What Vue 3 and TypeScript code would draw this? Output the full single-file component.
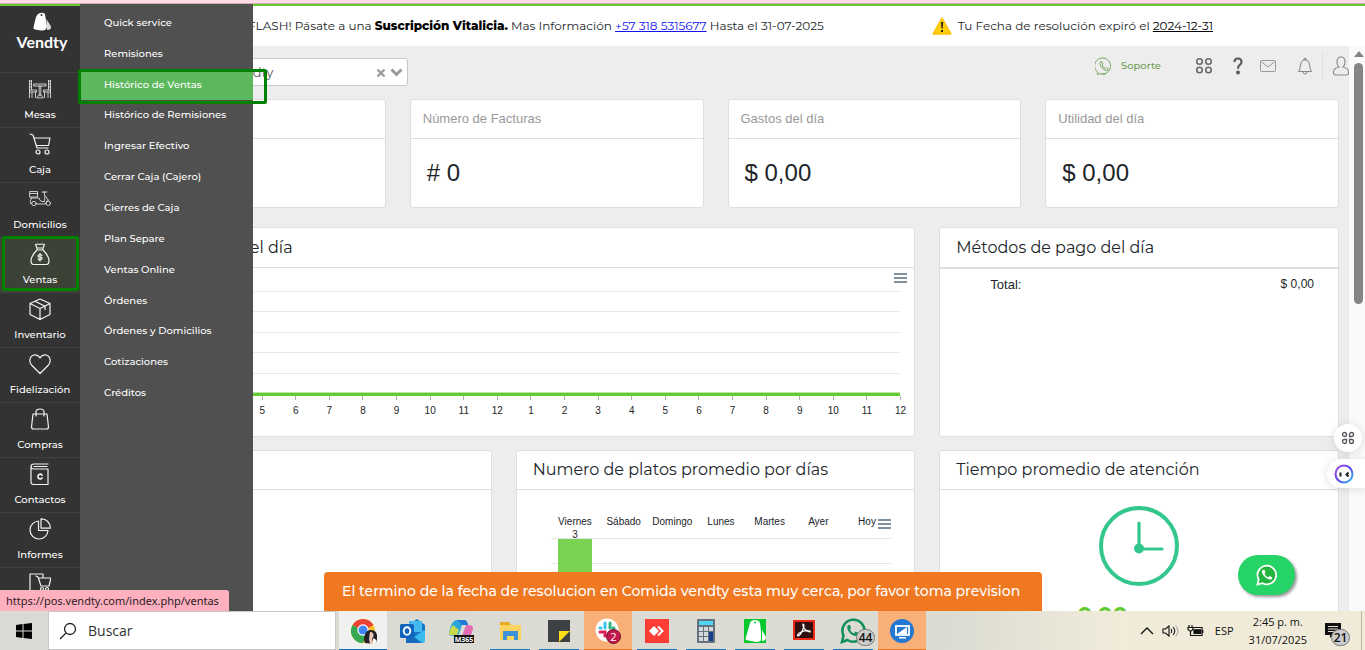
<script setup lang="ts">
import { ref } from 'vue'

interface NavItem {
  label: string
  icon: string
}

const nav: NavItem[] = [
  { label: 'Mesas', icon: 'table' },
  { label: 'Caja', icon: 'cart' },
  { label: 'Domicilios', icon: 'scooter' },
  { label: 'Ventas', icon: 'bag' },
  { label: 'Inventario', icon: 'box' },
  { label: 'Fidelización', icon: 'heart' },
  { label: 'Compras', icon: 'shop' },
  { label: 'Contactos', icon: 'book' },
  { label: 'Informes', icon: 'pie' },
  { label: '', icon: 'store' },
]

const active = ref('Ventas')

const submenu: string[] = [
  'Quick service',
  'Remisiones',
  'Histórico de Ventas',
  'Histórico de Remisiones',
  'Ingresar Efectivo',
  'Cerrar Caja (Cajero)',
  'Cierres de Caja',
  'Plan Separe',
  'Ventas Online',
  'Órdenes',
  'Órdenes y Domicilios',
  'Cotizaciones',
  'Créditos',
]

const stats = [
  { title: '', value: '' },
  { title: 'Número de Facturas', value: '# 0' },
  { title: 'Gastos del día', value: '$ 0,00' },
  { title: 'Utilidad del día', value: '$ 0,00' },
]

const hours: number[] = Array.from({ length: 24 }, (_, i) => (i % 12) + 1)

const days = [
  { name: 'Viernes', value: 3 },
  { name: 'Sábado', value: 0 },
  { name: 'Domingo', value: 0 },
  { name: 'Lunes', value: 0 },
  { name: 'Martes', value: 0 },
  { name: 'Ayer', value: 0 },
  { name: 'Hoy', value: 0 },
]

interface Task {
  name: string
  state: string
}

const tasks: Task[] = [
  { name: 'chrome', state: 'focused' },
  { name: 'outlook', state: '' },
  { name: 'm365', state: '' },
  { name: 'files', state: 'open' },
  { name: 'notes', state: 'open' },
  { name: 'slack', state: 'alert' },
  { name: 'anydesk', state: 'open' },
  { name: 'calc', state: 'open' },
  { name: 'vendty', state: 'open' },
  { name: 'acrobat', state: 'open' },
  { name: 'whatsapp', state: 'open' },
  { name: 'remote', state: 'alert' },
]

const store = ref('Comida vendty')
</script>

<template>
  <div class="screen">
    <div class="tabstrip"></div>
    <div class="app">
      <nav class="sidebar">
        <a class="logo" href="#">
          <svg width="20" height="20" viewBox="0 0 20 20">
            <path d="M4 5 Q5 2 8 1 Q11 0 13 2 L15 15 Q14 19 9 18.500 L3 17.500 Q1 17 1.500 15 Z" fill="#fff" />
            <path d="M14.500 7 L19 14.500 Q19.500 18 15 18 Z" fill="#ddd" />
            <circle cx="9.500" cy="3" r="1" fill="#333" />
          </svg>
          <span>Vendty</span>
        </a>
        <a
          v-for="item in nav"
          :key="item.icon"
          href="#"
          class="nav-item"
          :class="{ active: item.label === active }"
          @click.prevent="active = item.label"
        >
          <svg width="22" height="22" viewBox="0 0 22 22" fill="none" stroke="#f2f2f2" stroke-width="1.200" stroke-linecap="round" stroke-linejoin="round">
            <g v-if="item.icon === 'table'" stroke-width=".8">
              <path d="M.5 2.500v17M2.500 2.500v9M.5 3h2M.5 6h2M.5 9h2M1 12h6.500v2H1M3 14v5.500M6.500 14v5.500M21.500 2.500v17M19.500 2.500v9M21.500 3h-2M21.500 6h-2M21.500 9h-2M21 12h-6.500v2H21M19 14v5.500M15.500 14v5.500" />
              <path d="M5 6h12v2H5zM10.200 8v9M11.800 8v9M8 19.500q1-2.500 3-2.500t3 2.500z" />
            </g>
            <g v-else-if="item.icon === 'cart'">
              <path d="M1 1l3 1 4 13h11M5 5h16l-1.500 7.500H7.500" />
              <circle cx="9" cy="19" r="2" /><circle cx="18" cy="19" r="2" />
            </g>
            <g v-else-if="item.icon === 'scooter'" stroke-width=".8">
              <path d="M1 3.500h7.500V9H1zM1 5.500h7.500M1.500 10h8.500q.5 3 3 3.500h2.500q1-5-.5-9.500h3M13 4h3M2.500 10q-2 3-1 5.500h1M7.500 16h9q.5-3 3-4M16.500 8l2.500 4" />
              <circle cx="5" cy="15.500" r="2.200" /><circle cx="19.300" cy="15.300" r="2.200" />
            </g>
            <g v-else-if="item.icon === 'bag'">
              <path d="M8 5L6.500 1.500Q9 .5 10.500 1.500 13 .5 15.500 1.500L14 5zM8 7h6M8 5v2M14 5v2M8 7C4 11 2 14 2 18q0 3.500 3 3.500h12q3 0 3-3.500c0-4-2-7-6-11" />
              <path d="M13 12.500q-.5-1-2-1t-2 1.200 2 1.400 2 1.500-2 1.400-2-1.200M11 10.300V18" />
            </g>
            <g v-else-if="item.icon === 'box'">
              <path d="M11 1l10 4.500v11L11 21.500 1 16.500v-11zM1 5.500l10 5 10-5M11 10.500v11M6 3.200l10 5v3.300" />
            </g>
            <g v-else-if="item.icon === 'heart'">
              <path d="M11 20.500L2.500 12C-.5 8 1 3.500 4 2.300c3-1.200 6 .4 7 2.700 1-2.300 4-3.900 7-2.700 3 1.200 4.500 5.700 1.500 9.700z" />
            </g>
            <g v-else-if="item.icon === 'shop'">
              <path d="M4 6h14l1.500 13q0 2-2 2h-13q-2 0-2-2zM7 8V4q0-3 4-3t4 3v4" />
            </g>
            <g v-else-if="item.icon === 'book'">
              <path d="M19 1H5Q2 1 2 3.500V19q0 2.500 2.500 2.500H19V6H5Q2 6 2 3.500M5 3.500h13" />
              <path d="M13 12q-1-1.200-2.500-.8T9 13.500t1.500 2.300 2.500-.8" stroke-width="1.700" />
            </g>
            <g v-else-if="item.icon === 'pie'">
              <path d="M9.500 3a9 9 0 1 0 9.500 9.500H9.500z" />
              <path d="M12 .8v9.400h9.300A9 9 0 0 0 12 .8z" />
            </g>
            <g v-else>
              <path d="M14 5V1H1v20h8M7 3l2 1 3 9h8l2-8H9.500" />
              <circle cx="13" cy="16" r="1.500" /><circle cx="18" cy="16" r="1.500" />
            </g>
          </svg>
          <span>{{ item.label }}</span>
        </a>
      </nav>

      <div class="main">
        <header class="banner">
          <p class="promo">FLASH! Pásate a una <b>Suscripción Vitalicia.</b> Mas Información <a href="#">+57 318 5315677</a> Hasta el 31-07-2025</p>
          <p class="resolution">
            <svg width="20" height="18" viewBox="0 0 20 18">
              <path d="M10 1L19 17H1z" fill="#ffcd0a" stroke="#ffc107" stroke-width="1.500" stroke-linejoin="round" />
              <path d="M9 5h2.200l-.5 6.500H9.500zM9 13h2v2H9z" fill="#222" />
            </svg>
            <span>Tu Fecha de resolución expiró el <a href="#">2024-12-31</a></span>
          </p>
        </header>

        <div class="viewport">
          <div class="content">
            <div class="toolbar">
              <div class="store">
                <select v-model="store" aria-label="Almacén">
                  <option>Comida vendty</option>
                </select>
                <button class="clear" aria-label="Limpiar">
                  <svg width="10" height="10" viewBox="0 0 10 10"><path d="M1.500 1.500l7 7M8.500 1.500l-7 7" stroke="#999" stroke-width="2.200" /></svg>
                </button>
                <svg class="caret" width="13" height="9" viewBox="0 0 13 9"><path d="M1.500 1.500l5 5 5-5" fill="none" stroke="#999" stroke-width="3" /></svg>
              </div>
              <div class="tools">
                <a class="support" href="#">
                  <svg width="18" height="18" viewBox="0 0 18 18" fill="none" stroke="#7aa660" stroke-width="1">
                    <path d="M3 15.500A8 8 0 1 1 6 16.800L2 17.200zM7 17h4" />
                    <path d="M5.500 4.500Q4 6.500 6 9.500t5 4q2 .3 2.500-1.500l-2-1.500-1.200 1Q8 10.500 7 8l1-1-1-2.200z" />
                  </svg>
                  <span>Soporte</span>
                </a>
                <button class="apps" aria-label="Aplicaciones">
                  <svg width="18" height="18" viewBox="0 0 18 18" fill="none" stroke="#6b6b6b" stroke-width="1.600"><circle cx="4.500" cy="4.500" r="2.800" /><circle cx="13.500" cy="4.500" r="2.800" /><circle cx="4.500" cy="13" r="2.800" /><circle cx="13.500" cy="13" r="2.800" /></svg>
                </button>
                <button class="help" aria-label="Ayuda">
                  <svg width="10" height="18" viewBox="0 0 10 18"><path d="M1.500 5Q1.500 1.500 5 1.500T8.500 5Q8.500 7 6.500 8.200 5 9.200 5 11.800" fill="none" stroke="#5c5c5c" stroke-width="2.200" /><circle cx="5" cy="15.500" r="2" fill="#5c5c5c" /></svg>
                </button>
                <button class="mail" aria-label="Mensajes">
                  <svg width="18" height="14" viewBox="0 0 18 14" fill="none" stroke="#9a9a9a"><rect x="1.500" y="1.500" width="15" height="11" rx="1" /><path d="M2 2.500l7 5.500 7-5.500" /></svg>
                </button>
                <button class="bell" aria-label="Notificaciones">
                  <svg width="16" height="18" viewBox="0 0 16 18" fill="none" stroke="#858585"><path d="M1.500 14.500Q3 13 3.500 8 4 3 8 3t4.500 5q.5 5 2 6.500zM7 3V1.500h2V3M6 15q0 2 2 2t2-2" /></svg>
                </button>
                <span class="rule"></span>
                <button class="profile" aria-label="Perfil">
                  <svg width="18" height="20" viewBox="0 0 18 20" fill="none" stroke="#8c8c8c" stroke-width="1.200"><path d="M9 1Q5 1 5 6q0 3 2 5-5 1-5.500 4.500Q1 19 4 19h10q3 0 2.500-3.500Q16 12 11 11q2-2 2-5 0-5-4-5z" /></svg>
                </button>
              </div>
            </div>

            <section class="stats">
              <article v-for="(s, i) in stats" :key="i" class="card stat">
                <h3>{{ s.title }}</h3>
                <p>{{ s.value }}</p>
              </article>
            </section>

            <section class="row sales">
              <article class="card wide">
                <h2>del día</h2>
                <div class="hourly">
                  <button class="menu" aria-label="Menú"><i></i><i></i><i></i></button>
                  <div class="lines"><i v-for="n in 5" :key="n"></i></div>
                  <div class="series"></div>
                  <div class="ticks"><span v-for="(h, i) in hours" :key="i">{{ h }}</span></div>
                </div>
              </article>
              <article class="card payments">
                <h2>Métodos de pago del día</h2>
                <table><tbody><tr><th scope="row">Total:</th><td>$ 0,00</td></tr></tbody></table>
              </article>
            </section>

            <section class="row bottom">
              <article class="card"><h2></h2></article>
              <article class="card">
                <h2>Numero de platos promedio por días</h2>
                <div class="daily">
                  <button class="menu" aria-label="Menú"><i></i><i></i><i></i></button>
                  <div class="names"><span v-for="d in days" :key="d.name">{{ d.name }}</span></div>
                  <div class="plot">
                    <div v-for="d in days" :key="d.name" class="slot">
                      <template v-if="d.value">
                        <span class="num">{{ d.value }}</span>
                        <span class="bar"></span>
                      </template>
                    </div>
                  </div>
                </div>
              </article>
              <article class="card attention">
                <h2>Tiempo promedio de atención</h2>
                <svg width="80" height="80" viewBox="0 0 80 80" fill="none" stroke="#34c78d" stroke-width="4" stroke-linecap="round">
                  <circle cx="40" cy="40" r="38" /><path d="M40 17v26h23" stroke-width="3.200" /><circle cx="40" cy="42.500" r="3" fill="#34c78d" />
                </svg>
                <p>0.00</p>
              </article>
            </section>
          </div>
          <div class="scrollbar">
            <svg width="10" height="6" viewBox="0 0 10 6"><path d="M5 0l5 6H0z" fill="#858585" /></svg>
            <div class="thumb"></div>
          </div>
        </div>
      </div>

      <nav class="flyout">
        <a v-for="(label, i) in submenu" :key="label" href="#" :class="{ hot: i === 2 }">{{ label }}</a>
      </nav>
      <div class="marker"></div>

      <div class="status">https://pos.vendty.com/index.php/ventas</div>
      <div class="toast" role="alert">El termino de la fecha de resolucion en Comida vendty esta muy cerca, por favor toma prevision</div>

      <button class="chat" aria-label="WhatsApp">
        <svg width="22" height="22" viewBox="0 0 22 22"><path d="M1.500 20.500l1.200-5A9.300 9.300 0 1 1 6.500 19.200z" fill="#22b43c" stroke="#fff" stroke-width="1.800" /><path d="M6.500 6Q5 8 7.500 11.500t6.500 4.300q2.300-.3 2.200-2.500l-2.700-1.400-1.300 1.500Q9.500 12.300 8.500 9.700l1-1.200-1-2.700z" fill="#fff" /></svg>
      </button>
      <button class="bubble" aria-label="Atajos">
        <svg width="14" height="14" viewBox="0 0 14 14" fill="none" stroke="#55555c" stroke-width="1.300"><path d="M3.500 1.500a2 2 0 1 1 0 4 2 2 0 0 1 0-4zM8.500 5.500v-2a2 2 0 1 1 2 2zM3.500 8.500h2v2a2 2 0 1 1-2-2zM8.500 8.500h2a2 2 0 1 1-2 2z" /></svg>
      </button>
      <button class="assistant" aria-label="Asistente">
        <svg width="20" height="20" viewBox="0 0 20 20">
          <defs><linearGradient id="ring" x1="0" y1="0" x2="1" y2="1"><stop offset="0" stop-color="#b44ef0" /><stop offset=".5" stop-color="#5440ee" /><stop offset="1" stop-color="#35c8f2" /></linearGradient></defs>
          <circle cx="10" cy="10" r="8.500" fill="#fff" stroke="url(#ring)" stroke-width="2" />
          <path d="M6.500 8.500v4M14.500 8.500l-2 2 2 2" fill="none" stroke="#222" stroke-width="2" />
        </svg>
      </button>
    </div>

    <footer class="taskbar">
      <button class="start" aria-label="Inicio">
        <svg width="16" height="16" viewBox="0 0 16 16"><path d="M0 2l6.500-1v6.500H0zM7.500 1L16 0v7.500H7.500zM0 8.500h6.500V15L0 14zM7.500 8.500H16V16l-8.500-1z" /></svg>
      </button>
      <label class="search">
        <svg width="18" height="18" viewBox="0 0 18 18" fill="none" stroke="#222" stroke-width="1.300"><circle cx="11" cy="7" r="5.500" /><path d="M7 11l-6 6" /></svg>
        <input type="text" placeholder="Buscar" aria-label="Buscar" />
      </label>
      <div class="tasks">
        <button v-for="t in tasks" :key="t.name" :class="t.state" :aria-label="t.name">
          <svg width="28" height="28" viewBox="0 0 28 28">
            <g v-if="t.name === 'chrome'">
              <circle cx="14" cy="14" r="12" fill="#fbc02d" />
              <path d="M14 14L3.600 8A12 12 0 0 1 24.400 8z" fill="#ea4335" />
              <path d="M14 14L3.600 8A12 12 0 0 0 14 26l4-8z" fill="#34a853" />
              <circle cx="14" cy="13" r="5.700" fill="#fff" /><circle cx="14" cy="13" r="4.500" fill="#4285f4" />
              <path d="M16 26q-2-4 0-8 1-5 6-5t6 5q1 5-2 9z" fill="#262026" /><path d="M21 15q4 0 3.500 4L23 22l2 5h-4l-1-5z" fill="#e9c7b5" /><path d="M24 21l3.500 2-1 4H24z" fill="#fff" />
            </g>
            <g v-else-if="t.name === 'outlook'">
              <path d="M10 8L19 2l8 6v16H8z" fill="#1676c8" /><path d="M11 4h13v11H11z" fill="#45b9f0" /><path d="M8 26l18-13q1 0 1 2v9q0 2-3 2z" fill="#39bced" /><path d="M8 14l16 12H8z" fill="#1769bd" />
              <rect x="2" y="7" width="14" height="14" rx="1.500" fill="#0f65bd" /><ellipse cx="9" cy="14" rx="3.300" ry="3.800" fill="none" stroke="#fff" stroke-width="1.900" />
            </g>
            <g v-else-if="t.name === 'm365'">
              <path d="M2 17Q4 3 10 3h7q3 0 4 5h-6l-3 9q-1 2-4 2-6 0-6-2z" fill="#2aa6dd" /><path d="M2 17q1-6 4-9l6 5-2 5q-7 1-8-1z" fill="#c8d94a" /><path d="M19 8h3q4 0 4 4l-2 6q-2 4-5 4h-5z" fill="#e36bb0" /><path d="M10 3h7q3 0 4 5h-6z" fill="#2378d4" />
              <rect x="7" y="18" width="20" height="8" fill="#111" /><text x="17" y="25" text-anchor="middle" class="mini">M365</text>
            </g>
            <g v-else-if="t.name === 'files'"><path d="M4 5h9l2 3h10v15H4z" fill="#e7aa21" /><path d="M4 8h21v15H4z" fill="#ffd45e" /><path d="M7 14h15v9h-4v-4h-7v4H7z" fill="#3d93d7" /></g>
            <g v-else-if="t.name === 'notes'"><path d="M3 3h22v22H3z" fill="#3d4144" /><path d="M14 25V14h11z" fill="#ffdd16" /></g>
            <g v-else-if="t.name === 'slack'">
              <circle cx="13" cy="13" r="11.500" fill="#fff" />
              <g fill="none" stroke-width="3" stroke-linecap="round"><path d="M11 6v5M6 11h1" stroke="#36c5f0" /><path d="M16 6v5M20 11h-1" stroke="#2eb67d" /><path d="M6 15h5v4" stroke="#e01e5a" /><path d="M16 15h4" stroke="#ecb22e" /></g>
              <circle cx="19.500" cy="19.500" r="7" fill="#c2184b" stroke="#70102e" /><text x="19.500" y="23.500" text-anchor="middle" class="badge-text">2</text>
            </g>
            <g v-else-if="t.name === 'anydesk'"><path d="M2 2h24v24H2z" fill="#fb3d36" /><path d="M6 14l5-5 5 5-5 5z" fill="#fff" /><path d="M15 9.500l4.500 4.500-4.500 4.500" fill="none" stroke="#fff" stroke-width="2" /></g>
            <g v-else-if="t.name === 'calc'">
              <rect x="5" y="2" width="18" height="24" rx="1" fill="#65727e" /><path d="M7 4h14v4H7z" fill="#50d5f2" />
              <path d="M7 10h4v4H7zM12 10h4v4h-4zM17 10h4v4h-4zM7 15h4v4H7zM12 15h4v4h-4zM7 20h4v4H7zM12 20h4v4h-4z" fill="#d2d8dc" /><path d="M17 15h4v9h-4z" fill="#153f8a" />
            </g>
            <g v-else-if="t.name === 'vendty'"><path d="M3 2h22v24H3z" fill="#02c82f" /><path d="M9 6q1-3 5-3t5 3l1 8 0 9q-1 2-5 2L5 23q-1-1 0-3zM21 13l4 7q0 4-4 4z" fill="#fff" /><circle cx="14" cy="5.500" r="1" fill="#02c82f" /></g>
            <g v-else-if="t.name === 'acrobat'"><path d="M3 3h22v20H3z" fill="#f12a17" /><path d="M5 5h18v16H5z" fill="#301112" /><path d="M13 7q2 0 0 5-2 6-5 7-2-1 3-4 5-2 9-1 1 2-3 0-5-4-4-7z" fill="none" stroke="#fff" stroke-width="1.200" /></g>
            <g v-else-if="t.name === 'whatsapp'"><path d="M3 25l1.500-6.500a11 11 0 1 1 4 4.500z" fill="none" stroke="#12905a" stroke-width="2.600" /><path d="M9 8q-2 3 1 7t7 4q3-1 2.500-3l-3-1.500-1.500 2q-3-1-4-4l1-1.500-1-3z" fill="#12905a" /></g>
            <g v-else><circle cx="14" cy="14" r="12" fill="#2478d2" /><rect x="8" y="9" width="13" height="9" fill="none" stroke="#fff" stroke-width="1.800" /><path d="M9 17l10-7v7zM11 20h7v1.500h-7z" fill="#fff" /></g>
          </svg>
          <span v-if="t.name === 'whatsapp'" class="count">44</span>
        </button>
      </div>
      <div class="tray">
        <svg width="14" height="10" viewBox="0 0 14 10"><path d="M1 8l6-6 6 6" fill="none" stroke="#111" stroke-width="1.300" /></svg>
        <svg width="17" height="14" viewBox="0 0 17 14" fill="none" stroke="#111" stroke-width="1.100"><path d="M1 5h2.500L7 2v10L3.500 9H1zM9 5q1.500 2 0 4M11 3q3.500 4 0 8" /><path d="M13.500 1.500q5 5.500 0 11" stroke="#aaa" /></svg>
        <svg width="17" height="12" viewBox="0 0 17 12" fill="none" stroke="#111" stroke-width="1.200"><path d="M6 2.500h9v8H5M15.800 5v3M2 0v2.500M5 0v2.500M1 2.500h5v2L3.500 6.500 1 4.500zM3.500 6.500v4H5" /><path d="M7 4.800h6.500v3.500H7z" fill="#111" /></svg>
        <span class="lang">ESP</span>
        <time>2:45 p. m.<br />31/07/2025</time>
        <button class="notices" aria-label="Notificaciones">
          <svg width="16" height="16" viewBox="0 0 16 16"><path d="M0 0h16v12H8l-3 3v-3H0z" fill="#111" /><path d="M3 3.500h10M3 6h10M3 8.500h7" stroke="#e7e3d2" /></svg>
          <span class="count">21</span>
        </button>
        <i class="desk"></i>
      </div>
    </footer>
  </div>
</template>

<style>
body {
  margin: 0;
}
</style>

<style scoped>
* {
  box-sizing: border-box;
}
.screen {
  display: flex;
  flex-direction: column;
  height: 100vh;
  overflow: hidden;
  font-family: Montserrat, Inter, sans-serif;
  color: #212529;
}
button {
  padding: 0;
  border: 0;
  background: none;
  display: flex;
  align-items: center;
  justify-content: center;
}
svg {
  display: block;
  flex: none;
}
h2,
h3,
p {
  margin: 0;
  font-weight: 400;
}
a {
  color: inherit;
  text-decoration: none;
}
.tabstrip {
  height: 4px;
  flex: none;
  background: #ffdbe3;
  border-bottom: 1px solid #d9a9b4;
}
.app {
  position: relative;
  flex: 1;
  min-height: 0;
  display: flex;
}
.sidebar {
  width: 80px;
  flex: none;
  overflow: hidden;
  background: #333;
  border-top: 2px solid #62cb31;
  color: #fff;
}
.logo {
  height: 66px;
  padding: 6px 0 0 4px;
  display: flex;
  flex-direction: column;
  align-items: center;
  font: 700 16px/20px Lato, sans-serif;
}
.nav-item {
  position: relative;
  height: 55px;
  border-top: 1px solid #424242;
  padding-top: 5px;
  display: flex;
  flex-direction: column;
  align-items: center;
  gap: 7px;
  font-size: 10px;
  line-height: 16px;
  font-weight: 500;
}
.nav-item.active {
  background: #3d4237;
}
.nav-item.active::after {
  content: '';
  position: absolute;
  inset: -2px 1px 1px 2px;
  border: 3px solid #008000;
  border-radius: 2px;
}
.main {
  flex: 1;
  min-width: 0;
  display: flex;
  flex-direction: column;
}
.banner {
  height: 42px;
  flex: none;
  display: flex;
  align-items: center;
  justify-content: space-between;
  padding: 0 152px 0 168px;
  border-top: 2px solid #62cb31;
  background: #fff;
  font-size: 12px;
  line-height: 18px;
  white-space: nowrap;
}
.promo b {
  color: #000;
  font-weight: 800;
}
.promo a {
  color: #1414f0;
  text-decoration: underline;
}
.resolution {
  display: flex;
  align-items: center;
  gap: 6px;
}
.resolution a {
  color: #000;
  text-decoration: underline;
}
.viewport {
  flex: 1;
  min-height: 0;
  display: flex;
  background: #ededed;
}
.content {
  flex: 1;
  min-width: 0;
  padding: 0 10px 0 12px;
  overflow: hidden;
}
.scrollbar {
  width: 16px;
  padding: 5px 2px 0 5px;
  background: #fafafa;
  display: flex;
  flex-direction: column;
  align-items: center;
  gap: 6px;
}
.thumb {
  width: 9px;
  height: 241px;
  border-radius: 5px;
  background: #858585;
}
.toolbar {
  height: 53px;
  padding-left: 75px;
  display: flex;
  justify-content: space-between;
}
.store {
  position: relative;
  width: 241px;
  height: 28px;
  margin-top: 12px;
}
.store select {
  appearance: none;
  width: 100%;
  height: 100%;
  padding: 0 50px 0 7px;
  border: 1px solid #c8c8c8;
  border-radius: 3px;
  background: #fff;
  color: #556;
  font: 13px Montserrat, Inter, sans-serif;
}
.clear {
  position: absolute;
  right: 22px;
  top: 10px;
}
.caret {
  position: absolute;
  right: 5px;
  top: 10px;
  pointer-events: none;
}
.tools {
  height: 40px;
  display: flex;
  align-items: center;
  margin-right: -20px;
}
.tools .apps {
  width: 48px;
  margin-left: 19px;
}
.tools .help {
  width: 20px;
}
.tools .mail {
  width: 40px;
}
.tools .bell {
  width: 34px;
}
.tools .profile {
  width: 36px;
}
.support {
  display: flex;
  align-items: center;
  gap: 8px;
  color: #6f9c55;
  font-size: 10px;
  line-height: 16px;
  font-weight: 500;
}
.rule {
  width: 1px;
  height: 27px;
  background: #ddd;
}
.stats {
  display: grid;
  grid-template-columns: repeat(4, 1fr);
  gap: 24px;
}
.card {
  min-width: 0;
  border: 1px solid #dedede;
  border-radius: 3px;
  background: #fff;
  overflow: hidden;
}
.stat {
  height: 109px;
  font-family: 'Liberation Sans', Arial, sans-serif;
}
.stat h3 {
  height: 39px;
  padding: 0 12px;
  border-bottom: 1px solid #dedede;
  color: #999;
  font-size: 13px;
  line-height: 38px;
}
.stat p {
  padding: 18px 16px;
  font-size: 24px;
  line-height: 32px;
}
.card h2 {
  height: 39px;
  padding: 0 16px;
  border-bottom: 1px solid #dedede;
  font-size: 16px;
  line-height: 38px;
  white-space: nowrap;
}
.row {
  display: grid;
  grid-template-columns: repeat(3, 1fr);
  gap: 24px;
}
.sales {
  margin-top: 19px;
  height: 210px;
}
.sales h2 {
  height: 40px;
  line-height: 40px;
}
.wide {
  grid-column: span 2;
}
.wide h2 {
  padding-left: 146px;
}
.menu {
  position: absolute;
  display: flex;
  flex-direction: column;
  gap: 2px;
}
.menu i {
  width: 13px;
  height: 2px;
  background: #8091a0;
}
.hourly {
  position: relative;
  padding-top: 23px;
}
.hourly .menu {
  top: 5px;
  right: 7px;
}
.lines {
  margin: 0 14px 0 12px;
  height: 102px;
  display: grid;
  grid-template-rows: repeat(5, 1fr);
}
.lines i {
  border-top: 1px solid #e8e8e8;
}
.series {
  margin: -1px 14px 0 12px;
  height: 4px;
  border-top: 1px solid #b9e6a4;
  background: #62cb31;
}
.ticks {
  margin: 0 -3px 0 18px;
  display: grid;
  grid-template-columns: repeat(24, 1fr);
  font: 10px/12px 'Liberation Sans', Arial, sans-serif;
  text-align: center;
}
.ticks span::before {
  content: '';
  display: block;
  width: 1px;
  height: 4px;
  margin: 0 auto 5px;
  background: #9fb0ba;
}
.payments h2 {
  height: 41px;
  border-bottom-width: 2px;
}
.payments table {
  width: 100%;
  border-collapse: collapse;
  font-family: 'Liberation Sans', Arial, sans-serif;
}
.payments th {
  padding: 7px 0 0 50px;
  text-align: left;
  font-size: 13px;
  line-height: 18px;
  font-weight: 400;
}
.payments td {
  padding: 4px 24px 0 0;
  text-align: right;
  font-size: 12px;
  line-height: 18px;
}
.bottom {
  margin-top: 13px;
  height: 240px;
}
.daily {
  position: relative;
  padding: 26px 23px 0 34px;
  font: 10px/12px 'Liberation Sans', Arial, sans-serif;
  text-align: center;
}
.daily .menu {
  top: 29px;
  right: 23px;
}
.names,
.plot {
  display: grid;
  grid-template-columns: repeat(7, 1fr);
}
.plot {
  margin-top: 10px;
  height: 100px;
  border-top: 1px solid #e5e5e5;
  background: linear-gradient(#e5e5e5, #e5e5e5) 0 24px / 100% 1px no-repeat;
}
.slot {
  display: flex;
  flex-direction: column;
  align-items: center;
}
.num {
  height: 10px;
  margin-top: -10px;
}
.bar {
  width: 34px;
  flex: 1;
  background: #7ad352;
}
.attention svg {
  margin: 16px auto;
}
.attention p {
  padding-left: 137px;
  font-size: 22px;
  line-height: 26px;
  font-weight: 700;
  color: #62cb31;
}
.flyout {
  position: absolute;
  left: 80px;
  top: 0;
  bottom: 0;
  width: 173px;
  padding-top: 3px;
  background: #505050;
  color: #fff;
  display: grid;
  grid-template-rows: repeat(13, 1fr);
  padding-bottom: 203px;
  font-size: 10px;
  font-weight: 500;
}
.flyout a {
  padding-left: 24px;
  display: flex;
  align-items: center;
  white-space: nowrap;
}
.flyout .hot {
  background: #5cb85c;
}
.marker {
  position: absolute;
  left: 78px;
  top: 65px;
  width: 189px;
  height: 35px;
  border: 3px solid #008000;
  border-radius: 2px;
}
.status {
  position: absolute;
  left: 0;
  bottom: 0;
  height: 21px;
  padding: 0 10px 0 6px;
  border-radius: 0 3px 0 0;
  background: #ffb0bf;
  color: #2b2024;
  font: 11px/21px 'Noto Sans', 'Open Sans', sans-serif;
}
.toast {
  position: absolute;
  left: 324px;
  bottom: 0;
  height: 39px;
  padding: 0 22px 0 18px;
  border-radius: 4px 4px 0 0;
  background: #f07821;
  color: #fff;
  font-size: 14px;
  font-weight: 500;
  line-height: 38px;
  white-space: nowrap;
}
.chat {
  position: absolute;
  right: 70px;
  bottom: 16px;
  width: 57px;
  height: 40px;
  border-radius: 20px;
  background: #25d366;
  box-shadow: 2px 2px 3px #999;
}
.bubble {
  position: absolute;
  right: 3px;
  bottom: 159px;
  width: 28px;
  height: 28px;
  border-radius: 14px;
  background: #fff;
  box-shadow: 0 1px 8px #0002;
}
.assistant {
  position: absolute;
  right: 0;
  bottom: 123px;
  width: 38px;
  height: 29px;
  padding-right: 4px;
  border-radius: 15px 0 0 15px;
  background: #fff;
  box-shadow: 0 1px 8px #0002;
}
.taskbar {
  height: 39px;
  flex: none;
  display: flex;
  background: linear-gradient(90deg, #dadad4, #dcdcd3 70%, #f1ecda 82%, #f0ebd9);
  font-family: 'Open Sans', sans-serif;
}
.start {
  width: 48px;
}
.search {
  width: 288px;
  height: 39px;
  padding-left: 10px;
  border: 1px solid #c8c8c8;
  background: #fff;
  display: flex;
  align-items: center;
  gap: 11px;
}
.search input {
  width: 200px;
  border: 0;
  padding: 0;
  outline: 0;
  background: none;
  font: 14px 'Open Sans', sans-serif;
}
.search input::placeholder {
  color: #333;
  opacity: 1;
}
.tasks {
  display: flex;
  gap: 1px;
  padding-left: 3px;
}
.tasks button {
  position: relative;
  width: 48px;
  height: 39px;
}
.tasks .focused {
  background: #f0f1ee;
}
.tasks .alert {
  background: #f9b078;
}
.tasks .open::after,
.tasks .focused::after,
.tasks .alert::after {
  content: '';
  position: absolute;
  inset: auto 4px 0;
  height: 1px;
  background: #1174c4;
}
.tasks .focused::after,
.tasks .alert::after {
  left: 0;
  right: 0;
}
.tasks .alert::after {
  background: #f07821;
}
.mini {
  fill: #fff;
  font: bold 7px 'Open Sans', sans-serif;
}
.badge-text {
  fill: #fff;
  font: 11px 'Open Sans', sans-serif;
}
.count {
  position: absolute;
  right: 2px;
  bottom: 4px;
  width: 19px;
  height: 17px;
  border: 1px solid #777;
  border-radius: 9px;
  background: #ccc;
  color: #111;
  font: 600 12px/15px 'Open Sans', sans-serif;
  text-align: center;
}
.tray {
  margin-left: auto;
  display: flex;
  align-items: center;
  font-size: 11px;
  color: #111;
}
.tray svg {
  margin-right: 8px;
}
.lang {
  margin-left: 3px;
}
.tray time {
  margin: 0 18px 0 15px;
  line-height: 18px;
  text-align: center;
}
.notices {
  position: relative;
  width: 28px;
  height: 39px;
  justify-content: start;
}
.notices .count {
  right: 3px;
}
.desk {
  width: 4px;
  margin-left: 8px;
  align-self: stretch;
  border-left: 1px solid #b9b5a6;
}
</style>
